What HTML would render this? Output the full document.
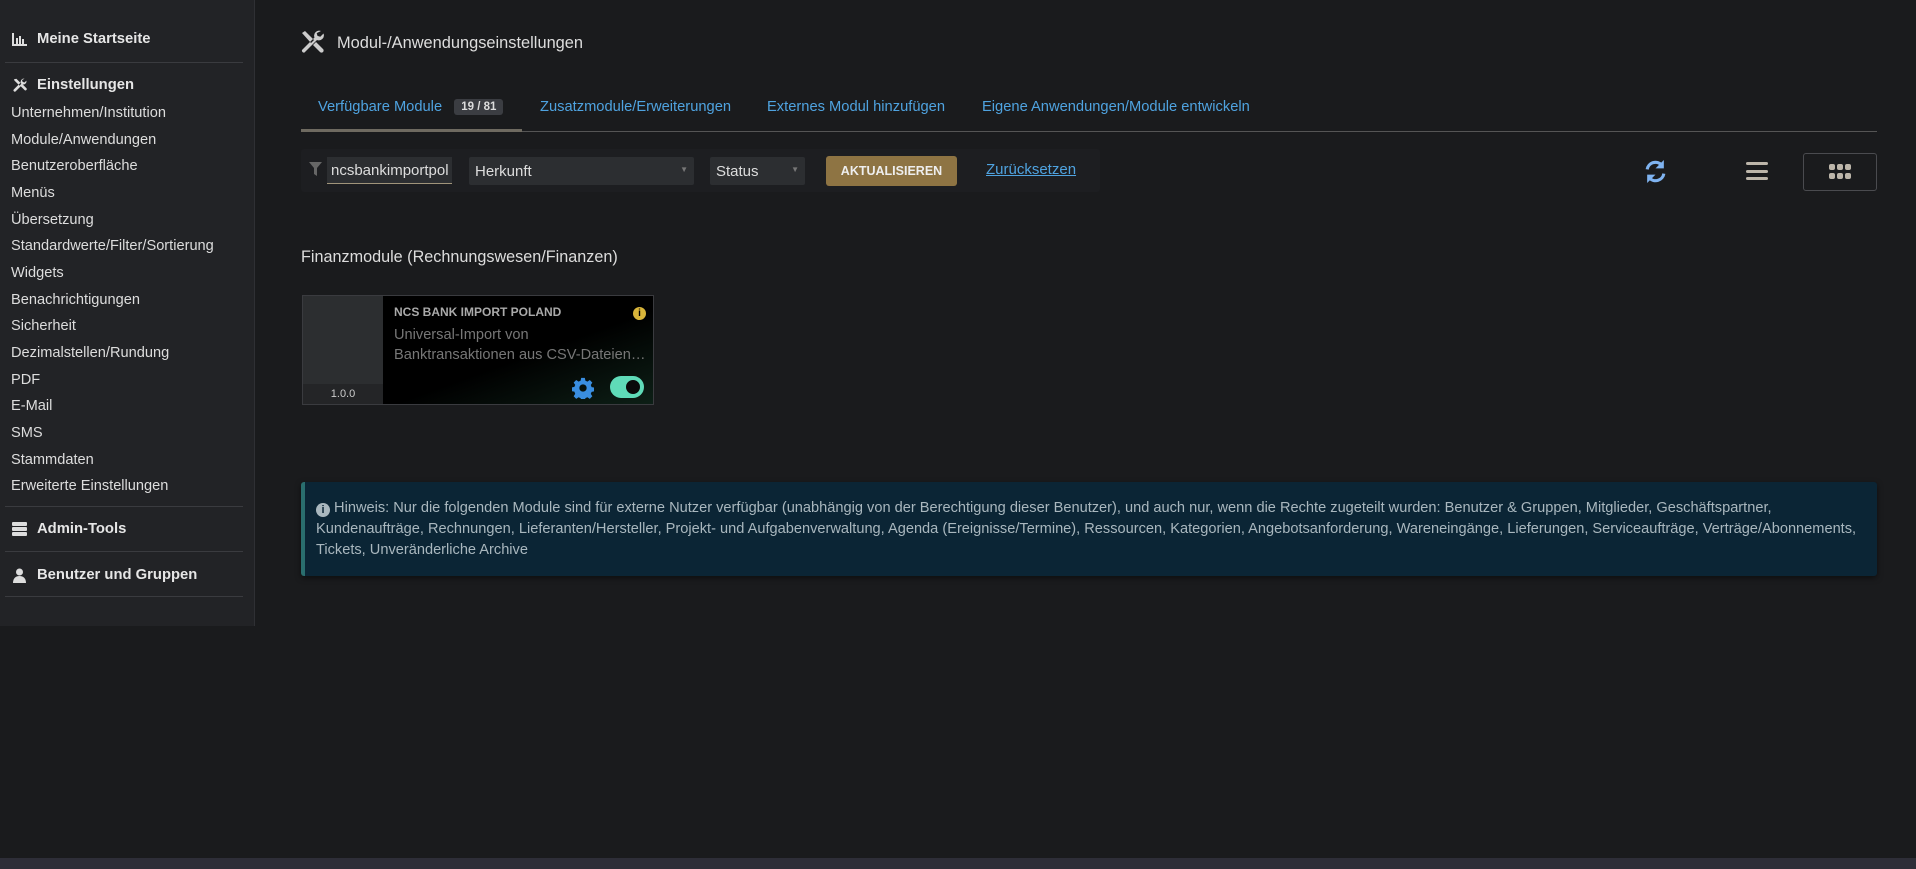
<!DOCTYPE html>
<html><head><meta charset="utf-8"><style>
*{box-sizing:border-box;margin:0;padding:0}
body{width:1916px;height:869px;background:#1a1b1d;font-family:"Liberation Sans",sans-serif;position:relative;overflow:hidden;color:#ddd}
.abs{position:absolute}
#side{left:0;top:0;width:255px;height:626px;background:#222326;border-right:1px solid #2f3034}
.si{position:absolute;left:11px;font-size:14.6px;color:#ddd;white-space:nowrap}
.sh{position:absolute;left:12px;font-size:14.8px;font-weight:bold;color:#e6e6e6;white-space:nowrap;display:flex;align-items:center;gap:10px}
.hr{position:absolute;left:5px;width:238px;height:1px;background:#3a3b3f}
.tab{position:absolute;top:99px;font-size:14.7px;color:#4fa3e0;white-space:nowrap}
</style></head><body>
<div id="side" class="abs">
 <div class="sh" style="top:31px"><svg width="15" height="13" viewBox="0 0 15 13"><path d="M1 0v12h14" stroke="#ddd" stroke-width="2" fill="none"/><rect x="4" y="5" width="2" height="6" fill="#ddd"/><rect x="7" y="3" width="2" height="8" fill="#ddd"/><rect x="10" y="6" width="2" height="5" fill="#ddd"/></svg>Meine Startseite</div>
 <div class="hr" style="top:62px"></div>
 <div class="sh" style="top:77px"><svg width="15" height="16" viewBox="0 0 24 24"><path d="M3 3l4-1 8 8-3 3-8-8z M14 14l3-3 6 6a2 2 0 0 1-3 3z M20 2a5 5 0 0 0-6 6L3 19a2 2 0 0 0 3 3L17 11a5 5 0 0 0 6-6l-3 3-3-1-1-3z" fill="#ddd"/></svg>Einstellungen</div>
 <div class="si" style="top:105px">Unternehmen/Institution</div>
 <div class="si" style="top:132px">Module/Anwendungen</div>
 <div class="si" style="top:158px">Benutzeroberfläche</div>
 <div class="si" style="top:185px">Menüs</div>
 <div class="si" style="top:212px">Übersetzung</div>
 <div class="si" style="top:238px">Standardwerte/Filter/Sortierung</div>
 <div class="si" style="top:265px">Widgets</div>
 <div class="si" style="top:292px">Benachrichtigungen</div>
 <div class="si" style="top:318px">Sicherheit</div>
 <div class="si" style="top:345px">Dezimalstellen/Rundung</div>
 <div class="si" style="top:372px">PDF</div>
 <div class="si" style="top:398px">E-Mail</div>
 <div class="si" style="top:425px">SMS</div>
 <div class="si" style="top:452px">Stammdaten</div>
 <div class="si" style="top:478px">Erweiterte Einstellungen</div>
 <div class="hr" style="top:506px"></div>
 <div class="sh" style="top:521px"><svg width="15" height="14" viewBox="0 0 15 14"><rect y="0" width="15" height="4" rx="1" fill="#ddd"/><rect y="5" width="15" height="4" rx="1" fill="#ddd"/><rect y="10" width="15" height="4" rx="1" fill="#ddd"/></svg>Admin-Tools</div>
 <div class="hr" style="top:551px"></div>
 <div class="sh" style="top:567px"><svg width="15" height="15" viewBox="0 0 15 15"><circle cx="7.5" cy="4" r="3.5" fill="#ddd"/><path d="M1 15c0-5 3-7 6.5-7s6.5 2 6.5 7z" fill="#ddd"/></svg>Benutzer und Gruppen</div>
 <div class="hr" style="top:596px"></div>
</div>

<svg class="abs" style="left:300px;top:30px" width="24" height="24" viewBox="0 0 24 24"><path d="M2 3l3-2 9 9-3 3z M13 15l3-3 7 7a2 2 0 0 1-3 3z M21 1a5 5 0 0 0-6.5 6.5L2 20a2 2 0 0 0 2.5 2.5L17 10a5 5 0 0 0 6.5-6.5l-3.2 3.2-2.8-.8-.8-2.8z" fill="#ccc"/></svg>
<div class="abs" style="left:337px;top:34px;font-size:16.4px;color:#ddd">Modul-/Anwendungseinstellungen</div>

<div class="tab" style="left:318px">Verfügbare Module <span style="display:inline-block;background:#3b3d42;color:#ddd;font-size:11.5px;font-weight:bold;padding:2px 7px;border-radius:3px;margin-left:8px;vertical-align:1px">19 / 81</span></div>
<div class="tab" style="left:540px">Zusatzmodule/Erweiterungen</div>
<div class="tab" style="left:767px">Externes Modul hinzufügen</div>
<div class="tab" style="left:982px">Eigene Anwendungen/Module entwickeln</div>
<div class="abs" style="left:301px;top:131px;width:1576px;height:1px;background:#555"></div>
<div class="abs" style="left:301px;top:129px;width:221px;height:3px;background:#6e6a60"></div>

<div class="abs" style="left:301px;top:149px;width:799px;height:43px;background:#1d1e21;border-radius:3px"></div>
<svg class="abs" style="left:309px;top:162px" width="13" height="14" viewBox="0 0 13 14"><path d="M0 0h13L8 6v8L5 12V6z" fill="#666"/></svg>
<div class="abs" style="left:327px;top:157px;width:125px;height:27px;background:#2c2e31;border-bottom:1px solid #a0947a;font-size:15px;color:#ddd;padding:5px 4px;overflow:hidden;white-space:nowrap">ncsbankimportpol</div>
<div class="abs" style="left:469px;top:157px;width:225px;height:28px;background:#2c2e31;border-radius:2px;font-size:15px;color:#ddd;padding:6px 6px">Herkunft<span style="position:absolute;right:6px;top:8px;font-size:8px;color:#777">▼</span></div>
<div class="abs" style="left:710px;top:157px;width:95px;height:28px;background:#2c2e31;border-radius:2px;font-size:15px;color:#ddd;padding:6px 6px">Status<span style="position:absolute;right:6px;top:8px;font-size:8px;color:#777">▼</span></div>
<div class="abs" style="left:826px;top:156px;width:131px;height:30px;background:#8e7443;border-radius:3px;font-size:12.5px;font-weight:bold;color:#eee;text-align:center;line-height:30px">AKTUALISIEREN</div>
<div class="abs" style="left:986px;top:161px;font-size:15px;color:#4fa3e0;text-decoration:underline">Zurücksetzen</div>

<svg class="abs" style="left:1643px;top:159px" width="25" height="25" viewBox="0 0 24 24"><path d="M4 10a8 8 0 0 1 14-4" stroke="#7fb3f0" stroke-width="3" fill="none"/><path d="M20 1v8h-8z" fill="#7fb3f0"/><path d="M20 14a8 8 0 0 1-14 4" stroke="#7fb3f0" stroke-width="3" fill="none"/><path d="M4 23v-8h8z" fill="#7fb3f0"/></svg>
<svg class="abs" style="left:1746px;top:162px" width="22" height="19"><rect y="0" width="22" height="3" rx="1.5" fill="#bdb6aa"/><rect y="8" width="22" height="3" rx="1.5" fill="#bdb6aa"/><rect y="15" width="22" height="3" rx="1.5" fill="#bdb6aa"/></svg>
<div class="abs" style="left:1803px;top:153px;width:74px;height:38px;border:1px solid #4a4b4f;border-radius:3px"></div>
<svg class="abs" style="left:1829px;top:164px" width="22" height="16"><g fill="#bdb6aa"><rect x="0" y="0" width="6" height="6" rx="2"/><rect x="8" y="0" width="6" height="6" rx="2"/><rect x="16" y="0" width="6" height="6" rx="2"/><rect x="0" y="9" width="6" height="6" rx="2"/><rect x="8" y="9" width="6" height="6" rx="2"/><rect x="16" y="9" width="6" height="6" rx="2"/></g></svg>

<div class="abs" style="left:301px;top:248px;font-size:16.2px;color:#ddd">Finanzmodule (Rechnungswesen/Finanzen)</div>

<div class="abs" style="left:302px;top:295px;width:352px;height:110px;border:1px solid #3a3b3f;background:linear-gradient(160deg,#000 60%,#0d1f16)">
 <div class="abs" style="left:0;top:0;width:80px;height:108px;background:#2c2e30"></div>
 <div class="abs" style="left:0;top:88px;width:80px;height:20px;background:#242527;font-size:11px;color:#ccc;text-align:center;line-height:20px">1.0.0</div>
 <div class="abs" style="left:91px;top:9px;font-size:12px;font-weight:bold;color:#aaa">NCS BANK IMPORT POLAND</div>
 <div class="abs" style="left:330px;top:11px;width:13px;height:13px;border-radius:50%;background:#d9b53a;color:#000;font-size:10px;font-weight:bold;text-align:center;line-height:13px">i</div>
 <div class="abs" style="left:91px;top:29px;width:255px;font-size:14.6px;color:#777;line-height:20px;white-space:nowrap;overflow:hidden;text-overflow:ellipsis">Universal-Import von<br>Banktransaktionen aus CSV-Dateien…</div>
 <svg class="abs" style="left:269px;top:81px" width="22" height="22" viewBox="0 0 24 24"><path fill="#3a8ee0" fill-rule="evenodd" d="M10 1h4l.6 3 2.2 1 2.6-1.7 2.8 2.8L20.5 8.7l.9 2.3 3 .6v4l-3 .6-.9 2.2 1.7 2.6-2.8 2.8-2.6-1.7-2.2.9-.6 3h-4l-.6-3-2.2-.9-2.6 1.7-2.8-2.8 1.7-2.6L2.6 16l-3-.6v-4l3-.6.9-2.2L1.8 6.1 4.6 3.3 7.2 5l2.2-1z M12 8a4 4 0 1 0 0 8 4 4 0 0 0 0-8z"/></svg>
 <div class="abs" style="left:307px;top:80px;width:34px;height:22px;border-radius:11px;background:#5fdbb8"><div style="position:absolute;right:4px;top:4px;width:14px;height:14px;border-radius:50%;background:#0a0a0a"></div></div>
</div>

<div class="abs" style="left:301px;top:482px;width:1576px;height:94px;background:#0b2535;border-left:4px solid #2a6e6e;border-radius:3px;box-shadow:0 2px 6px rgba(0,0,0,.5);padding:16px 4px 0 11px;font-size:14.6px;color:#a9b7be;line-height:21px;white-space:nowrap;overflow:hidden"><span style="display:inline-block;width:14px;height:14px;border-radius:50%;background:#a9b7be;color:#0b2535;font-size:11px;font-weight:bold;text-align:center;line-height:14px;vertical-align:-1px">i</span> Hinweis: Nur die folgenden Module sind für externe Nutzer verfügbar (unabhängig von der Berechtigung dieser Benutzer), und auch nur, wenn die Rechte zugeteilt wurden: Benutzer &amp; Gruppen, Mitglieder, Geschäftspartner,<br>Kundenaufträge, Rechnungen, Lieferanten/Hersteller, Projekt- und Aufgabenverwaltung, Agenda (Ereignisse/Termine), Ressourcen, Kategorien, Angebotsanforderung, Wareneingänge, Lieferungen, Serviceaufträge, Verträge/Abonnements,<br>Tickets, Unveränderliche Archive</div>

<div class="abs" style="left:0;top:858px;width:1916px;height:11px;background:#2e2e38"></div>
</body></html>
